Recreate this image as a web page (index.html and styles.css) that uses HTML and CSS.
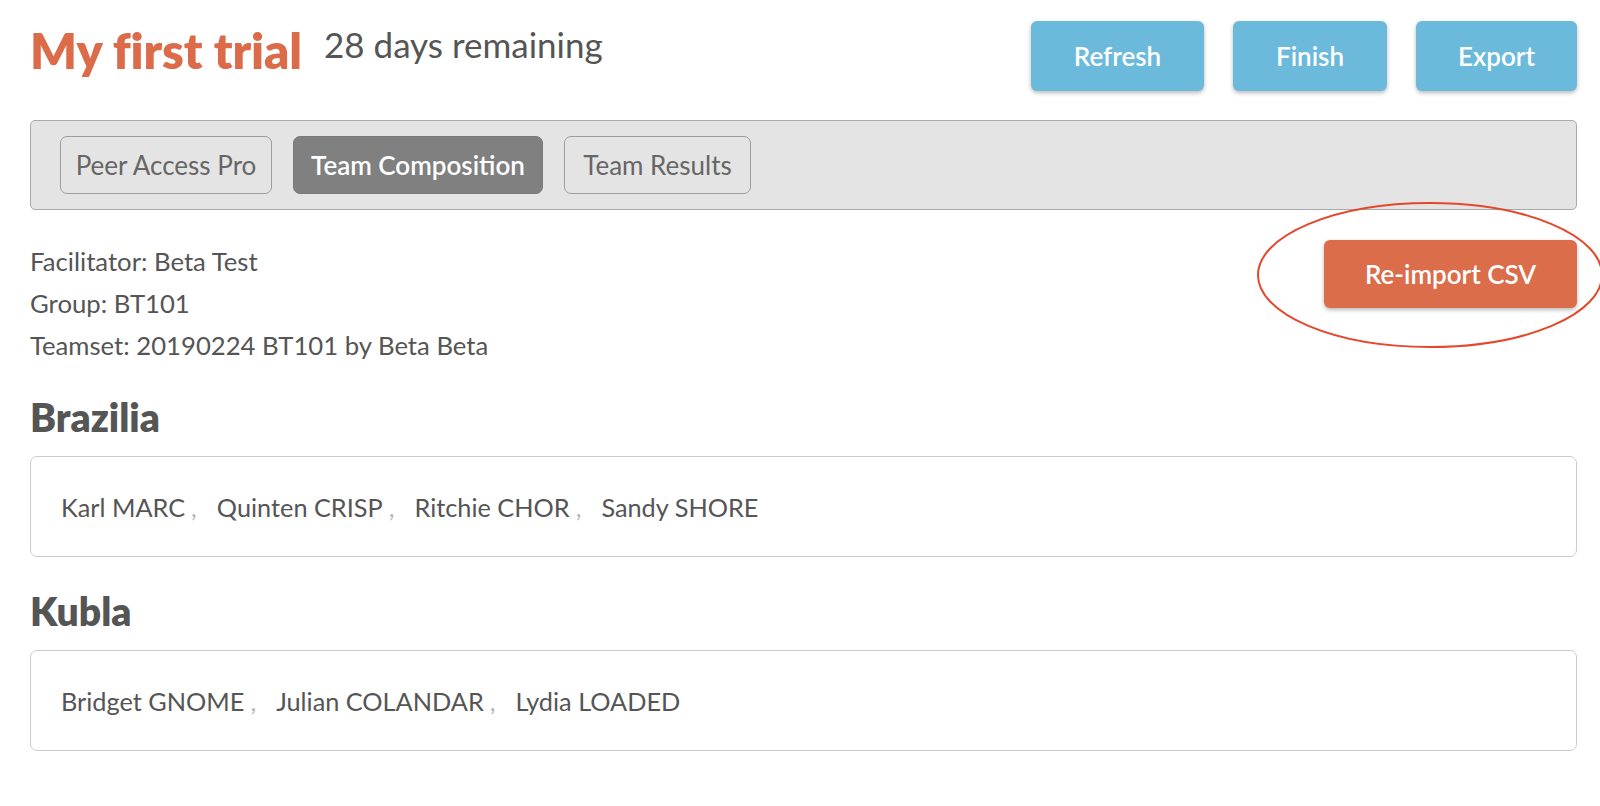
FILE: index.html
```html
<!DOCTYPE html>
<html lang="en">
<head>
<meta charset="utf-8">
<title>My first trial</title>
<link rel="stylesheet" href="styles.css">
</head>
<body>
<div class="page">
  <header class="header">
    <div class="title-group">
      <h1 class="title">My first trial</h1>
      <span class="remaining">28 days remaining</span>
    </div>
    <div class="actions">
      <button class="btn btn-blue btn-refresh">Refresh</button>
      <button class="btn btn-blue btn-finish">Finish</button>
      <button class="btn btn-blue btn-export">Export</button>
    </div>
  </header>

  <nav class="tabbar">
    <a class="tab tab-peer">Peer Access Pro</a>
    <a class="tab tab-active">Team Composition</a>
    <a class="tab tab-results">Team Results</a>
  </nav>

  <section class="info">
    <div class="info-lines">
      <div>Facilitator: Beta Test</div>
      <div>Group: BT101</div>
      <div>Teamset: 20190224 BT101 by Beta Beta</div>
    </div>
    <button class="btn btn-orange">Re-import CSV</button>
  </section>

  <section class="team">
    <h2 class="team-name">Brazilia</h2>
    <div class="card">
      <span class="member">Karl MARC</span><span class="member">Quinten CRISP</span><span class="member">Ritchie CHOR</span><span class="member">Sandy SHORE</span>
    </div>
  </section>

  <section class="team">
    <h2 class="team-name">Kubla</h2>
    <div class="card">
      <span class="member">Bridget GNOME</span><span class="member">Julian COLANDAR</span><span class="member">Lydia LOADED</span>
    </div>
  </section>
</div>

<svg class="annotation" width="344" height="150" viewBox="0 0 344 150" aria-hidden="true">
  <ellipse cx="174" cy="74" rx="172" ry="72" fill="none" stroke="#e5472a" stroke-width="2"/>
</svg>
</body>
</html>
```

FILE: styles.css
```css
html, body {
  margin: 0;
  padding: 0;
  background: #ffffff;
  overflow: hidden;
}

body {
  font-family: Lato, "Liberation Sans", sans-serif;
  color: #555555;
  position: relative;
  width: 1600px;
  height: 806px;
}

.page {
  padding: 21px 23px 0 30px;
}

.header {
  display: flex;
  justify-content: space-between;
  align-items: flex-start;
  height: 70px;
}

.title-group {
  display: flex;
  align-items: baseline;
  gap: 22px;
}

.title {
  margin: 0;
  font-size: 49px;
  font-weight: 800;
  color: #dc6b49;
  line-height: 58px;
  letter-spacing: -0.1px;
}

.remaining {
  font-size: 35px;
  color: #555555;
  position: relative;
  top: -11px;
}

.actions {
  display: flex;
  gap: 29px;
}

.btn {
  border: none;
  font-family: Lato, "Liberation Sans", sans-serif;
  font-weight: 600;
  font-size: 26px;
  color: #ffffff;
  border-radius: 6px;
  box-shadow: 0 2px 4px rgba(0, 0, 0, 0.28);
  cursor: pointer;
  padding: 0;
  height: 70px;
}

.btn-blue {
  background: #6bbadc;
}

.btn-refresh { width: 173px; }
.btn-finish { width: 154px; }
.btn-export { width: 161px; }

.tabbar {
  margin-top: 29px;
  height: 90px;
  box-sizing: border-box;
  background: #e4e4e4;
  border: 1px solid #a9a9a9;
  border-radius: 5px;
  display: flex;
  align-items: center;
  gap: 21px;
  padding: 0 29px;
}

.tab {
  display: flex;
  align-items: center;
  justify-content: center;
  height: 58px;
  box-sizing: border-box;
  border: 1px solid #9c9c9c;
  border-radius: 7px;
  font-size: 26px;
  color: #666666;
  background: #e4e4e4;
}

.tab-peer { width: 212px; }
.tab-results { width: 187px; }

.tab-active {
  width: 250px;
  background: #808080;
  border-color: #7a7a7a;
  color: #ffffff;
  font-weight: 600;
}

.info {
  display: flex;
  justify-content: space-between;
  align-items: flex-start;
}

.info-lines {
  margin-top: 30px;
  font-size: 25.7px;
  line-height: 42px;
}

.btn-orange {
  margin-top: 30px;
  width: 253px;
  height: 68px;
  background: #db6d4a;
}

.team-name {
  margin: 28px 0 16px;
  font-size: 39px;
  line-height: 46px;
  font-weight: 800;
  color: #555555;
}

.team + .team .team-name {
  margin-top: 31px;
  margin-bottom: 16px;
}

.card {
  height: 101px;
  box-sizing: border-box;
  border: 1px solid #cccccc;
  border-radius: 7px;
  display: flex;
  align-items: center;
  padding: 0 30px;
  font-size: 25.3px;
  color: #555555;
}

.member::after {
  content: ",";
  color: #b5b5b5;
  margin-left: 6px;
  margin-right: 20px;
}

.member:last-child::after {
  content: "";
  margin: 0;
}

.annotation {
  position: absolute;
  left: 1256px;
  top: 201px;
  pointer-events: none;
}
```
